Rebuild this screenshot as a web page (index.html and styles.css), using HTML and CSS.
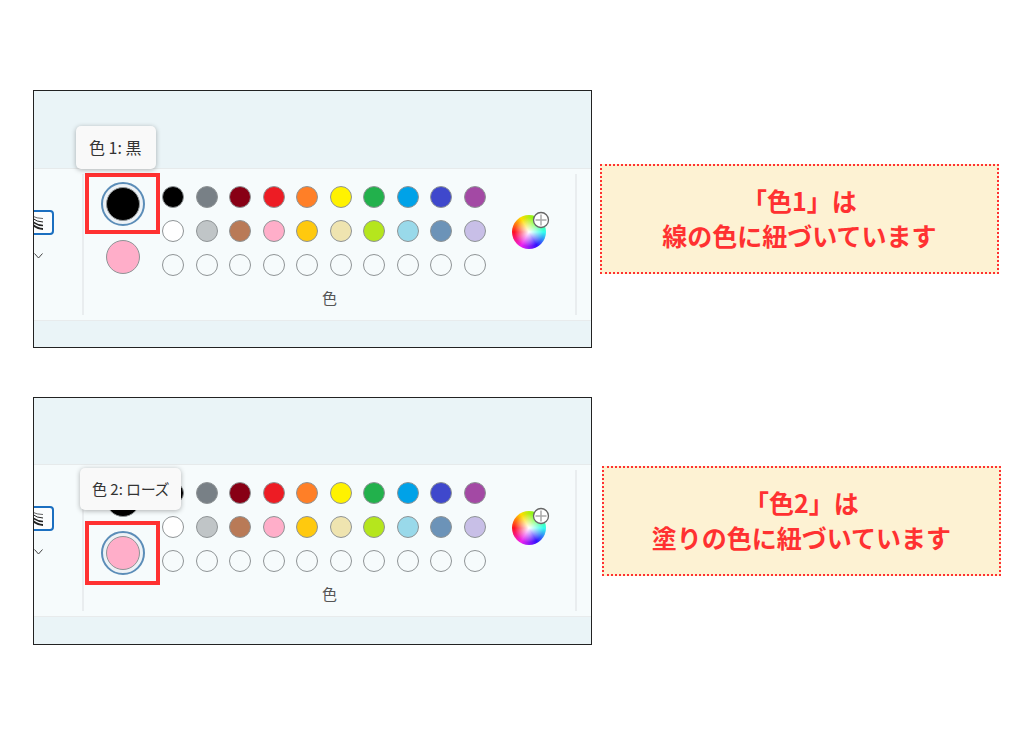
FILE: index.html
```html
<!DOCTYPE html>
<html lang="ja">
<head>
    <meta charset="UTF-8">
    <meta name="viewport" content="width=device-width, initial-scale=1.0">
    <title>色1と色2</title>
    <link rel="stylesheet" href="styles.css">
</head>
<body>
    <main class="page">
        <!-- 色1 -->
        <section class="example">
            <div class="panel">
                <div class="canvas-top"></div>
                <div class="ribbon">
                    <div class="brushes">
                        <button class="brush" aria-label="ブラシ">
                            <svg width="12" height="16" viewBox="0 0 12 16" fill="none" stroke="#222">
                                <path d="M0 1Q5 3.500 11 3.500" stroke-width=".7"/>
                                <path d="M0 3Q5 7 11 7" stroke-width="1"/>
                                <path d="M0 6Q5 10.500 11 10.500" stroke-width="1.300"/>
                                <path d="M0 9Q5 14 11 14" stroke-width="1.800"/>
                            </svg>
                        </button>
                        <button class="more" aria-label="ブラシの一覧">
                            <svg width="9" height="6" viewBox="0 0 9 6" fill="none" stroke="#444"><path d="M.5.5l4 4.500 4-4.500"/></svg>
                        </button>
                    </div>
                    <div class="group">
                        <div class="group-row">
                            <div class="current">
                                <div class="slot">
                                    <button class="pick active" aria-label="色 1: 黒"><span class="dot black"></span></button>
                                    <div class="frame"></div>
                                </div>
                                <div class="slot">
                                    <button class="pick" aria-label="色 2: ローズ"><span class="dot rose"></span></button>
                                </div>
                            </div>
                            <div class="palette">
                                <button class="swatch black" aria-label="黒"></button>
                                <button class="swatch gray" aria-label="灰色"></button>
                                <button class="swatch darkred" aria-label="濃い赤"></button>
                                <button class="swatch red" aria-label="赤"></button>
                                <button class="swatch orange" aria-label="オレンジ"></button>
                                <button class="swatch yellow" aria-label="黄"></button>
                                <button class="swatch green" aria-label="緑"></button>
                                <button class="swatch turquoise" aria-label="青緑"></button>
                                <button class="swatch indigo" aria-label="藍色"></button>
                                <button class="swatch purple" aria-label="紫"></button>
                                <button class="swatch white" aria-label="白"></button>
                                <button class="swatch silver" aria-label="薄い灰色"></button>
                                <button class="swatch brown" aria-label="茶"></button>
                                <button class="swatch rose" aria-label="ローズ"></button>
                                <button class="swatch gold" aria-label="ゴールド"></button>
                                <button class="swatch cream" aria-label="薄い黄"></button>
                                <button class="swatch lime" aria-label="ライム"></button>
                                <button class="swatch sky" aria-label="薄い水色"></button>
                                <button class="swatch steel" aria-label="青灰色"></button>
                                <button class="swatch lavender" aria-label="ラベンダー"></button>
                                <button class="swatch" aria-label="空き 1"></button>
                                <button class="swatch" aria-label="空き 2"></button>
                                <button class="swatch" aria-label="空き 3"></button>
                                <button class="swatch" aria-label="空き 4"></button>
                                <button class="swatch" aria-label="空き 5"></button>
                                <button class="swatch" aria-label="空き 6"></button>
                                <button class="swatch" aria-label="空き 7"></button>
                                <button class="swatch" aria-label="空き 8"></button>
                                <button class="swatch" aria-label="空き 9"></button>
                                <button class="swatch" aria-label="空き 10"></button>
                            </div>
                            <button class="wheel" aria-label="色の編集">
                                <svg class="plus" width="18" height="18" viewBox="0 0 18 18" fill="#fff">
                                    <circle cx="9" cy="9" r="7.500" stroke="#666" stroke-width="1.300"/>
                                    <path d="M9 3.500v11M3.500 9h11" stroke="#aaa" stroke-width="1.500"/>
                                </svg>
                            </button>
                        </div>
                        <div class="group-label">色</div>
                    </div>
                </div>
                <div class="canvas-bottom"></div>
                <div class="tooltip tooltip-1" role="tooltip">色 1: 黒</div>
            </div>
            <p class="callout">「色1」は<br>線の色に紐づいています</p>
        </section>

        <!-- 色2 -->
        <section class="example second">
            <div class="panel">
                <div class="canvas-top"></div>
                <div class="ribbon">
                    <div class="brushes">
                        <button class="brush" aria-label="ブラシ">
                            <svg width="12" height="16" viewBox="0 0 12 16" fill="none" stroke="#222">
                                <path d="M0 1Q5 3.500 11 3.500" stroke-width=".7"/>
                                <path d="M0 3Q5 7 11 7" stroke-width="1"/>
                                <path d="M0 6Q5 10.500 11 10.500" stroke-width="1.300"/>
                                <path d="M0 9Q5 14 11 14" stroke-width="1.800"/>
                            </svg>
                        </button>
                        <button class="more" aria-label="ブラシの一覧">
                            <svg width="9" height="6" viewBox="0 0 9 6" fill="none" stroke="#444"><path d="M.5.5l4 4.500 4-4.500"/></svg>
                        </button>
                    </div>
                    <div class="group">
                        <div class="group-row">
                            <div class="current">
                                <div class="slot">
                                    <button class="pick" aria-label="色 1: 黒"><span class="dot black"></span></button>
                                </div>
                                <div class="slot">
                                    <button class="pick active" aria-label="色 2: ローズ"><span class="dot rose"></span></button>
                                    <div class="frame"></div>
                                </div>
                            </div>
                            <div class="palette">
                                <button class="swatch black" aria-label="黒"></button>
                                <button class="swatch gray" aria-label="灰色"></button>
                                <button class="swatch darkred" aria-label="濃い赤"></button>
                                <button class="swatch red" aria-label="赤"></button>
                                <button class="swatch orange" aria-label="オレンジ"></button>
                                <button class="swatch yellow" aria-label="黄"></button>
                                <button class="swatch green" aria-label="緑"></button>
                                <button class="swatch turquoise" aria-label="青緑"></button>
                                <button class="swatch indigo" aria-label="藍色"></button>
                                <button class="swatch purple" aria-label="紫"></button>
                                <button class="swatch white" aria-label="白"></button>
                                <button class="swatch silver" aria-label="薄い灰色"></button>
                                <button class="swatch brown" aria-label="茶"></button>
                                <button class="swatch rose" aria-label="ローズ"></button>
                                <button class="swatch gold" aria-label="ゴールド"></button>
                                <button class="swatch cream" aria-label="薄い黄"></button>
                                <button class="swatch lime" aria-label="ライム"></button>
                                <button class="swatch sky" aria-label="薄い水色"></button>
                                <button class="swatch steel" aria-label="青灰色"></button>
                                <button class="swatch lavender" aria-label="ラベンダー"></button>
                                <button class="swatch" aria-label="空き 1"></button>
                                <button class="swatch" aria-label="空き 2"></button>
                                <button class="swatch" aria-label="空き 3"></button>
                                <button class="swatch" aria-label="空き 4"></button>
                                <button class="swatch" aria-label="空き 5"></button>
                                <button class="swatch" aria-label="空き 6"></button>
                                <button class="swatch" aria-label="空き 7"></button>
                                <button class="swatch" aria-label="空き 8"></button>
                                <button class="swatch" aria-label="空き 9"></button>
                                <button class="swatch" aria-label="空き 10"></button>
                            </div>
                            <button class="wheel" aria-label="色の編集">
                                <svg class="plus" width="18" height="18" viewBox="0 0 18 18" fill="#fff">
                                    <circle cx="9" cy="9" r="7.500" stroke="#666" stroke-width="1.300"/>
                                    <path d="M9 3.500v11M3.500 9h11" stroke="#aaa" stroke-width="1.500"/>
                                </svg>
                            </button>
                        </div>
                        <div class="group-label">色</div>
                    </div>
                </div>
                <div class="canvas-bottom"></div>
                <div class="tooltip tooltip-2" role="tooltip">色 2: ローズ</div>
            </div>
            <p class="callout">「色2」は<br>塗りの色に紐づいています</p>
        </section>
    </main>
</body>
</html>
```
FILE: styles.css
```css
* {
    box-sizing: border-box;
}
body {
    margin: 0;
    background-color: #fff;
    font-family: "Noto Sans CJK JP", sans-serif;
}
button {
    padding: 0;
    border: none;
    background: none;
    cursor: pointer;
}
.page {
    display: flex;
    flex-direction: column;
    gap: 49px;
    padding: 90px 23px 0 33px;
}
.example {
    display: grid;
    grid-template-columns: 559fr 401fr;
    gap: 8px;
    align-items: start;
}

/* Paint window */
.panel {
    position: relative;
    overflow: hidden;
    border: 1px solid #222;
    background-color: #eaf4f7;
}
.canvas-top {
    height: 78px;
    border-bottom: 1px solid #e6eaeb;
}
.second .canvas-top {
    height: 67px;
}
.canvas-bottom {
    height: 26px;
}
.second .canvas-bottom {
    height: 27px;
}
.ribbon {
    display: flex;
    padding: 5px 14px 5px 0;
    border-bottom: 1px solid #e8ebec;
    background-color: #f6fbfc;
}

/* Brushes, cut off by the window edge */
.brushes {
    display: flex;
    flex-direction: column;
    align-items: flex-start;
    gap: 18px;
    width: 48px;
    padding-top: 36px;
}
.brush {
    display: flex;
    align-items: center;
    justify-content: flex-end;
    width: 40px;
    height: 25px;
    margin-left: -20px;
    padding-right: 8px;
    border: 2px solid #1b6fc0;
    border-radius: 4px;
    background-color: #fbfdfe;
}
.more {
    display: flex;
}

/* Colors */
.group {
    flex: 1;
    border-left: 2px solid #e9edef;
    border-right: 2px solid #e9edef;
    padding-bottom: 7px;
}
.group-row {
    display: flex;
    align-items: flex-start;
    padding: 8px 29px 0 17px;
}
.current {
    display: flex;
    flex-direction: column;
    gap: 9px;
}
.slot {
    position: relative;
}
.pick {
    display: flex;
    align-items: center;
    justify-content: center;
    width: 44px;
    height: 44px;
    border-radius: 50%;
}
.pick.active {
    border: 2px solid #5b8db8;
    background-color: #edf2f6;
}
.dot {
    width: 34px;
    height: 34px;
    border: 1px solid #8f9496;
    border-radius: 50%;
}
.frame {
    position: absolute;
    inset: -9px -15px -8px -16px;
    border: 4px solid #ff3131;
    pointer-events: none;
}
.second .frame {
    inset: -10px -15px -10px -16px;
}
.palette {
    flex: 1;
    display: grid;
    grid-template-columns: repeat(10, 22px);
    justify-content: space-between;
    align-content: space-between;
    height: 90px;
    margin: 4px 26px 0 17px;
}
.swatch {
    width: 22px;
    height: 22px;
    border: 1px solid #8f9496;
    border-radius: 50%;
}
.wheel {
    position: relative;
    width: 34px;
    height: 34px;
    margin-top: 33px;
    border-radius: 50%;
    background: radial-gradient(circle, #fff 0, rgba(255, 255, 255, 0) 60%),
        conic-gradient(from 270deg, #f12, #fd0, #6f2, #3fe, #31f, #e2e, #f12);
}
.plus {
    position: absolute;
    top: -4px;
    right: -4px;
}
.group-label {
    margin-top: 9px;
    color: #555;
    font-size: 15px;
    line-height: 20px;
    text-align: center;
}

.black { background-color: #000; }
.gray { background-color: #788086; }
.darkred { background-color: #880015; }
.red { background-color: #ed1c24; }
.orange { background-color: #ff7f27; }
.yellow { background-color: #fff200; }
.green { background-color: #22b14c; }
.turquoise { background-color: #00a2e8; }
.indigo { background-color: #3f48cc; }
.purple { background-color: #a349a4; }
.white { background-color: #fff; }
.silver { background-color: #c0c5c7; }
.brown { background-color: #b97a57; }
.rose { background-color: #ffaec9; }
.gold { background-color: #ffc90e; }
.cream { background-color: #efe4b0; }
.lime { background-color: #b5e61d; }
.sky { background-color: #99d9ea; }
.steel { background-color: #6c93b8; }
.lavender { background-color: #c8bfe7; }

.tooltip {
    position: absolute;
    border-radius: 5px;
    background-color: #f9f9f9;
    box-shadow: 0 1px 5px rgba(0, 0, 0, 0.3);
    color: #333;
    line-height: 20px;
    white-space: nowrap;
}
.tooltip-1 {
    top: 35px;
    left: 42px;
    padding: 11px 14px 12px 13px;
    font-size: 16px;
}
.tooltip-2 {
    top: 70px;
    left: 46px;
    padding: 11px 12px;
    font-size: 15px;
    font-feature-settings: "palt";
}

/* Notes */
.callout {
    margin: 74px 2px 0 0;
    padding: 17px 10px 19px;
    border: 2px dotted #ff3131;
    background-color: #fdf2d3;
    color: #ff3131;
    font-size: 25px;
    font-weight: bold;
    line-height: 35px;
    text-align: center;
}
.second .callout {
    margin: 69px 0 0 2px;
}
```
